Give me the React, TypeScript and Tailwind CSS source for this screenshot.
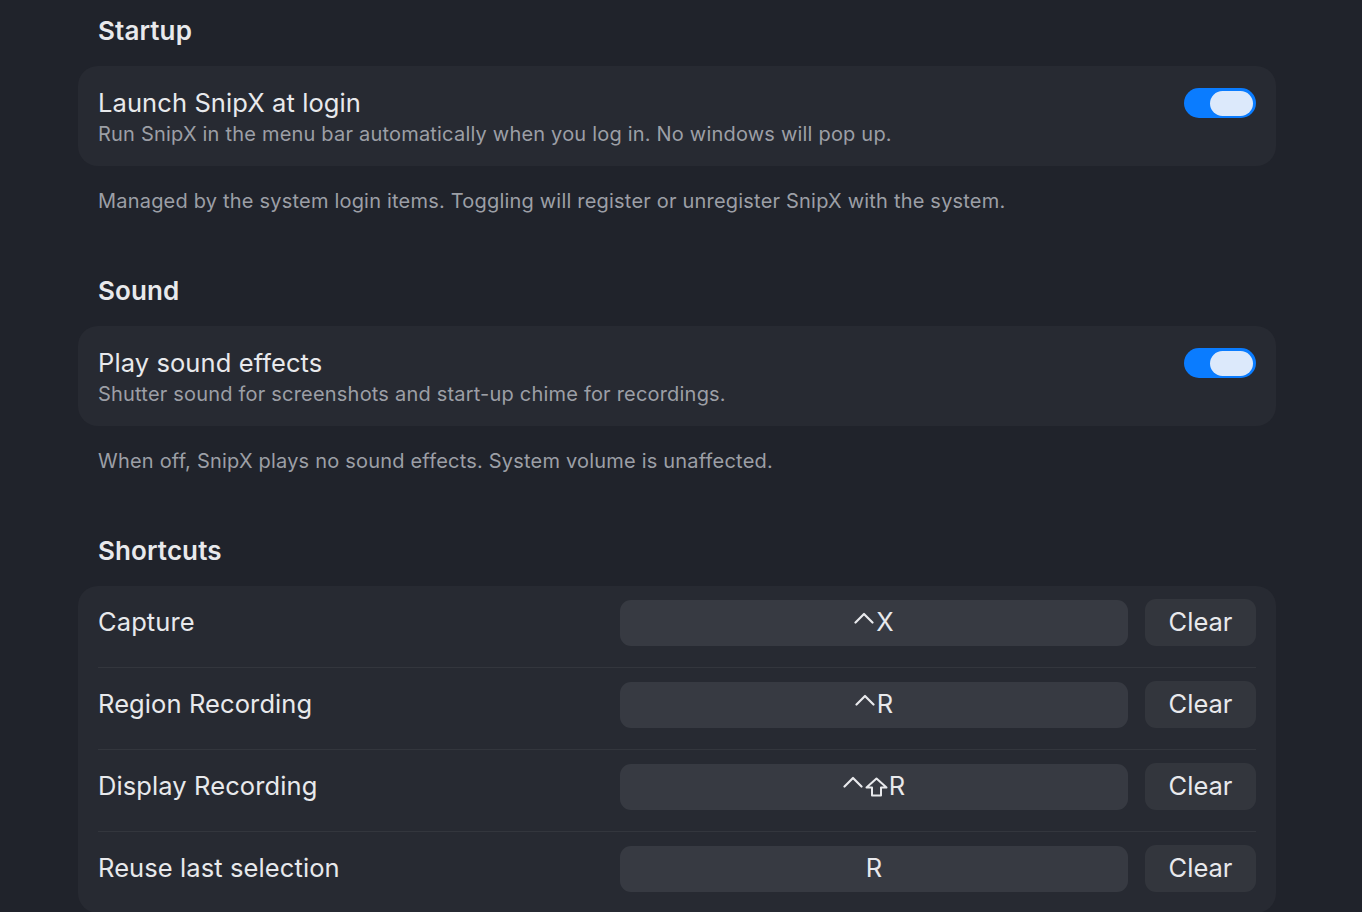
import React from "react";

function Toggle() {
  return (
    <div className="w-[72px] h-[30px] rounded-full bg-[#0a7cff] flex items-center justify-end pr-[3px] shrink-0">
      <div className="w-[43px] h-[25px] rounded-full bg-[#dce9fb]" />
    </div>
  );
}

function Section({ title, children }: { title: string; children: React.ReactNode }) {
  return (
    <div className="flex flex-col">
      <div className="px-5 h-[36px] flex items-center text-[26px] font-semibold text-[#e8e9ec] tracking-[0.1px]">{title}</div>
      <div className="h-[18px]" />
      {children}
    </div>
  );
}

function ToggleCard({ title, sub, note }: { title: string; sub: string; note: string }) {
  return (
    <>
      <div className="rounded-[20px] bg-[#272a32] px-5 pt-[22px] pb-[16px] flex items-start justify-between">
        <div className="flex flex-col">
          <div className="text-[25.5px] leading-[30px] tracking-[0.1px] text-[#e8e9ec]">{title}</div>
          <div className="text-[20px] leading-[32px] tracking-[0.2px] text-[#9c9fa6]">{sub}</div>
        </div>
        <Toggle />
      </div>
      <div className="px-5 pt-[22px] text-[20px] leading-[26px] tracking-[0.2px] text-[#9c9fa6]">{note}</div>
    </>
  );
}

function Caret() {
  return (
    <svg width="20" height="12" viewBox="0 0 20 12" className="inline-block mr-[2px] mb-[10px]" fill="none" stroke="#e8e9ec" strokeWidth="2.2" strokeLinecap="round" strokeLinejoin="round">
      <path d="M1.5 10.5 L10 2 L18.5 10.5" />
    </svg>
  );
}

function ShiftIcon() {
  return (
    <svg width="23" height="20" viewBox="0 0 23 20" className="inline-block mr-[1px]" fill="none" stroke="#e8e9ec" strokeWidth="2" strokeLinejoin="round">
      <path d="M11.5 1.5 L21.5 10.5 L16 10.5 L16 18.5 L7 18.5 L7 10.5 L1.5 10.5 Z" />
    </svg>
  );
}

function Row({ label, keys, last }: { label: string; keys: React.ReactNode; last?: boolean }) {
  return (
    <div className={`flex items-center pt-[13px] pb-[21px] ${last ? "" : "border-b border-[#33363d]"}`}>
      <div className="flex-1 text-[25.5px] tracking-[0.1px] text-[#e8e9ec]">{label}</div>
      <div className="w-[508px] h-[46px] rounded-[11px] bg-[#373a42] flex items-center justify-center text-[25.5px] text-[#e8e9ec]">
        {keys}
      </div>
      <div className="ml-[17px] w-[111px] h-[47px] rounded-[11px] bg-[#33363d] flex items-center justify-center text-[25.5px] text-[#e8e9ec]">
        Clear
      </div>
    </div>
  );
}

export default function App() {
  return (
    <div
      className="w-[1362px] h-[912px] overflow-hidden bg-[#20232b] pl-[78px] pr-[86px] pt-[12px]"
      style={{ fontFamily: "Inter, 'Noto Sans', sans-serif" }}
    >
      <Section title="Startup">
        <ToggleCard
          title="Launch SnipX at login"
          sub="Run SnipX in the menu bar automatically when you log in. No windows will pop up."
          note="Managed by the system login items. Toggling will register or unregister SnipX with the system."
        />
      </Section>
      <div className="h-[58px]" />
      <Section title="Sound">
        <ToggleCard
          title="Play sound effects"
          sub="Shutter sound for screenshots and start-up chime for recordings."
          note="When off, SnipX plays no sound effects. System volume is unaffected."
        />
      </Section>
      <div className="h-[58px]" />
      <Section title="Shortcuts">
        <div className="rounded-[20px] bg-[#272a32] px-5">
          <Row label="Capture" keys={<><Caret />X</>} />
          <Row label="Region Recording" keys={<><Caret />R</>} />
          <Row label="Display Recording" keys={<><Caret /><ShiftIcon />R</>} />
          <Row label="Reuse last selection" keys={<>R</>} last />
        </div>
      </Section>
    </div>
  );
}
